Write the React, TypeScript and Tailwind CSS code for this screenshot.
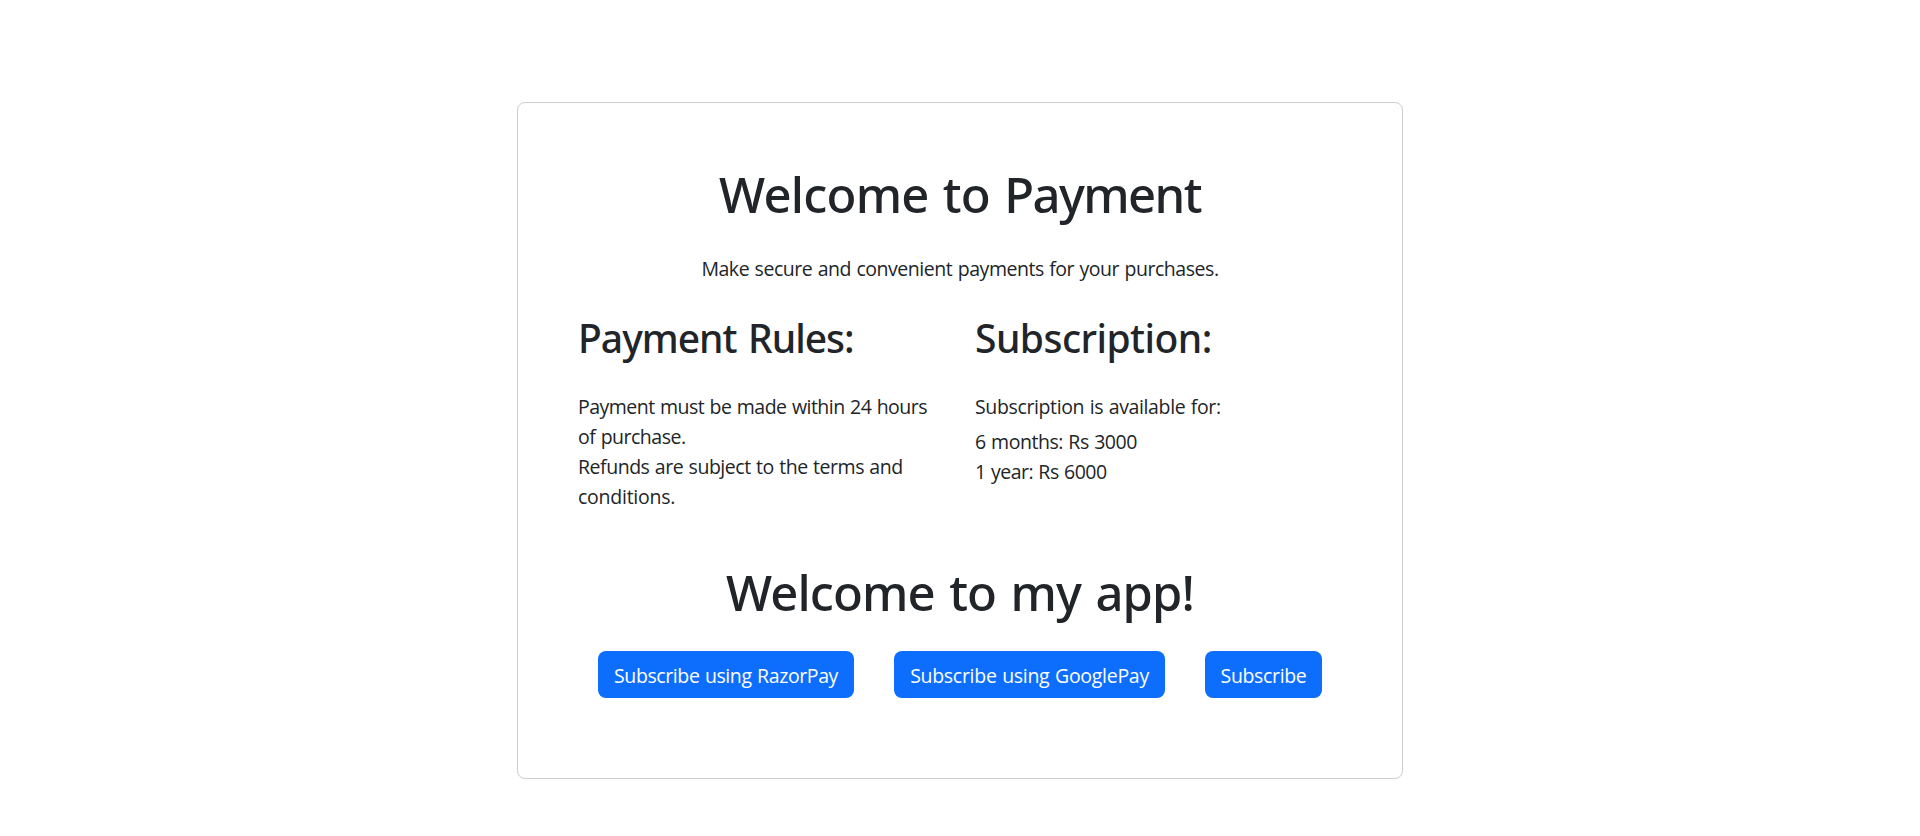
const titleClass =
  "pt-px text-center font-['Noto_Sans',sans-serif] text-[49px] font-medium leading-[59px] whitespace-nowrap";
const sectionClass =
  "font-['Noto_Sans',sans-serif] text-[39px] font-medium leading-[48px] whitespace-nowrap";

const buttons = [
  { label: "Subscribe using RazorPay", className: "w-64 tracking-[-0.4px]" },
  { label: "Subscribe using GooglePay", className: "w-[271px] tracking-[-0.285px]" },
  { label: "Subscribe", className: "w-[117px] tracking-[-0.34px]" },
];

function PaymentRules() {
  return (
    <section>
      <h2 className={`${sectionClass} tracking-[-0.98px] [word-spacing:2.3px]`}>Payment Rules:</h2>
      <ul className="mt-[30px] whitespace-nowrap">
        <li>
          <span className="block tracking-[-0.51px]">Payment must be made within 24 hours</span>
          <span className="block tracking-[-0.5px]">of purchase.</span>
        </li>
        <li>
          <span className="block tracking-[-0.466px]">Refunds are subject to the terms and</span>
          <span className="block tracking-[-0.25px]">conditions.</span>
        </li>
      </ul>
    </section>
  );
}

function Subscription() {
  return (
    <section>
      <h2 className={`${sectionClass} tracking-[-0.54px]`}>Subscription:</h2>
      <p className="mt-[30px] tracking-[-0.366px]">Subscription is available for:</p>
      <ul className="mt-[5px]">
        <li className="tracking-[-0.46px]">6 months: Rs 3000</li>
        <li className="tracking-[-0.52px]">1 year: Rs 6000</li>
      </ul>
    </section>
  );
}

export default function App() {
  return (
    <div className="flex h-[836px] justify-center overflow-hidden bg-white pt-[102px] font-['Open_Sans',sans-serif] text-[19.5px] leading-[30px] text-[#212529] [word-spacing:0.8px]">
      <main className="h-[677px] w-[886px] rounded-lg border border-[#ccc] px-[60px] pt-[61px]">
        <h1 className={`${titleClass} tracking-[-0.77px] [word-spacing:2.2px]`}>
          Welcome to <span className="tracking-[-1.59px]">Payment</span>
        </h1>
        <p className="mt-[30px] text-center tracking-[-0.458px]">
          Make secure and convenient payments for your purchases.
        </p>
        <div className="mt-[30px] grid grid-cols-2 gap-[30px]">
          <PaymentRules />
          <Subscription />
        </div>
        <h1 className={`${titleClass} mt-[50px] tracking-[-0.9px] [word-spacing:2.6px]`}>
          Welcome to my app!
        </h1>
        <div className="mt-[29px] flex justify-center gap-10">
          {buttons.map((button) => (
            <button
              key={button.label}
              className={`${button.className} h-[47px] rounded-lg bg-[#0d6efd] pt-[2px] text-center whitespace-nowrap text-white [word-spacing:0.8px]`}
            >
              {button.label}
            </button>
          ))}
        </div>
      </main>
    </div>
  );
}
